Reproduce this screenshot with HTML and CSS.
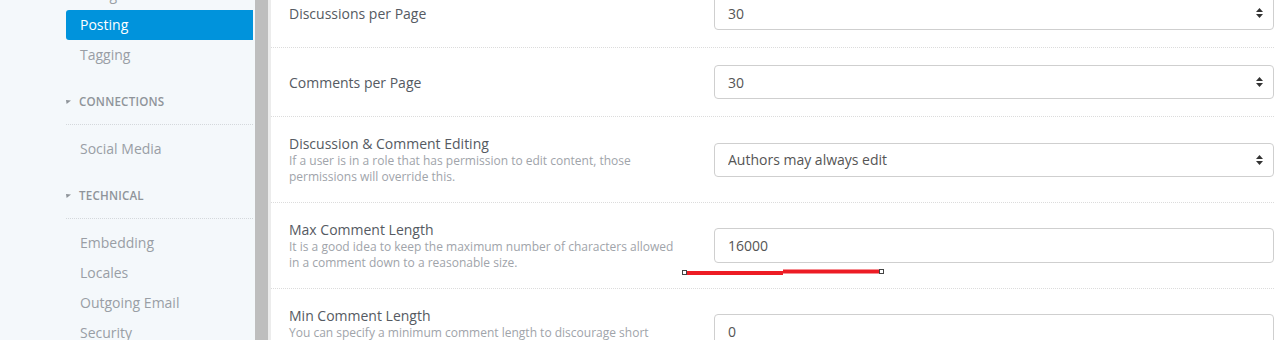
FILE: index.html
```html
<!DOCTYPE html>
<html lang="en">
<head>
  <meta charset="UTF-8">
  <meta name="viewport" content="width=device-width, initial-scale=1.0">
  <title>Dashboard - Posting</title>

  <link rel="stylesheet" href="styles.css">
</head>
<body>
  <div class="layout">
    <aside class="sidebar">
      <ul class="nav first">
        <li class="nav-item">Categories</li>
        <li class="nav-item active">Posting</li>
        <li class="nav-item">Tagging</li>
      </ul>

      <div class="nav-heading">
        <svg class="caret" width="5" height="4" viewBox="0 0 5 4"><polygon points="0,0 5,0.6 0.6,4" fill="#8f949a"/></svg>
        Connections
      </div>
      <ul class="nav">
        <li class="nav-item">Social Media</li>
      </ul>

      <div class="nav-heading">
        <svg class="caret" width="5" height="4" viewBox="0 0 5 4"><polygon points="0,0 5,0.6 0.6,4" fill="#8f949a"/></svg>
        Technical
      </div>
      <ul class="nav">
        <li class="nav-item">Embedding</li>
        <li class="nav-item">Locales</li>
        <li class="nav-item">Outgoing Email</li>
        <li class="nav-item">Security</li>
      </ul>
    </aside>

    <div class="scrollbar"></div>

    <main class="content">
      <ul class="form-list">
        <li class="form-row">
          <div class="label-wrap">
            <div class="label">Discussions per Page</div>
          </div>
          <div class="input-wrap select-wrap">
            <select class="form-control"><option>30</option></select>
            <svg class="select-arrow" width="7" height="10" viewBox="0 0 7 10"><polygon points="3.5,0 7,4 0,4" fill="#333"/><polygon points="0,6 7,6 3.5,10" fill="#333"/></svg>
          </div>
        </li>

        <li class="form-row">
          <div class="label-wrap">
            <div class="label">Comments per Page</div>
          </div>
          <div class="input-wrap select-wrap">
            <select class="form-control"><option>30</option></select>
            <svg class="select-arrow" width="7" height="10" viewBox="0 0 7 10"><polygon points="3.5,0 7,4 0,4" fill="#333"/><polygon points="0,6 7,6 3.5,10" fill="#333"/></svg>
          </div>
        </li>

        <li class="form-row">
          <div class="label-wrap">
            <div class="label">Discussion &amp; Comment Editing</div>
            <div class="info">If a user is in a role that has permission to edit content, those permissions will override this.</div>
          </div>
          <div class="input-wrap select-wrap">
            <select class="form-control"><option>Authors may always edit</option></select>
            <svg class="select-arrow" width="7" height="10" viewBox="0 0 7 10"><polygon points="3.5,0 7,4 0,4" fill="#333"/><polygon points="0,6 7,6 3.5,10" fill="#333"/></svg>
          </div>
        </li>

        <li class="form-row">
          <div class="label-wrap">
            <div class="label">Max Comment Length</div>
            <div class="info">It is a good idea to keep the maximum number of characters allowed in a comment down to a reasonable size.</div>
          </div>
          <div class="input-wrap">
            <input class="form-control" type="text" value="16000">
          </div>
        </li>

        <li class="form-row">
          <div class="label-wrap">
            <div class="label">Min Comment Length</div>
            <div class="info">You can specify a minimum comment length to discourage short comments.</div>
          </div>
          <div class="input-wrap">
            <input class="form-control" type="text" value="0">
          </div>
        </li>
      </ul>
    </main>
  </div>

  <!-- red markup line drawn over the screenshot -->
  <svg class="markup" width="203" height="9" viewBox="0 0 203 9">
    <rect x="5" y="3" width="96" height="4" fill="#ed1c24"/>
    <rect x="101" y="1.5" width="96" height="4" fill="#ed1c24"/>
    <rect x="0.5" y="2.5" width="4" height="4" fill="#fff" stroke="#444"/>
    <rect x="197.5" y="1.5" width="4" height="4" fill="#fff" stroke="#444"/>
  </svg>
</body>
</html>
```

FILE: styles.css
```css
* {
  box-sizing: border-box;
}

html, body {
  height: 100%;
}

body {
  margin: 0;
  font-family: 'Open Sans', 'Liberation Sans', sans-serif;
  font-size: 14px;
  color: #555a62;
  background: #fff;
  overflow: hidden;
}

.layout {
  display: flex;
  height: 100%;
}

/* sidebar */

.sidebar {
  flex: 0 0 255px;
  background-color: #f4f8fb;
  padding-left: 66px;
  padding-right: 2px;
}

.nav {
  list-style: none;
  margin: 9px 0 0;
  padding: 0;
}

.nav.first {
  margin-top: -20px;
}

.nav-item {
  height: 30px;
  line-height: 30px;
  padding-left: 14px;
  color: #999ea5;
  font-size: 14px;
}

.nav-item.active {
  background-color: #0093dc;
  color: #fff;
  border-radius: 3px 0 0 3px;
}

.nav-heading {
  display: flex;
  align-items: center;
  gap: 8px;
  padding: 24px 0 14px;
  line-height: 16px;
  font-size: 11.6px;
  font-weight: 600;
  text-transform: uppercase;
  letter-spacing: 0.2px;
  color: #8f949a;
  border-bottom: 1px dotted #d4d8dc;
}

.caret {
  display: block;
  flex: none;
}

/* fake scrollbar track */

.scrollbar {
  flex: 0 0 16px;
  background-color: #ececec;
  border-left: 13px solid #bebebe;
}

/* main form */

.content {
  flex: 1;
  min-width: 0;
}

.form-list {
  list-style: none;
  margin: -21px 0 0;
  padding: 0;
}

.form-row {
  display: flex;
  align-items: center;
  padding: 17px 0 17px 18px;
  border-bottom: 1px dotted #dcdcdc;
}

.label-wrap {
  flex: 0 0 395px;
  margin-right: 30px;
}

.label {
  font-size: 14px;
  line-height: 19px;
  color: #555a62;
}

.info {
  max-width: 396px;
  font-size: 12px;
  line-height: 16px;
  color: #a0a4aa;
}

.input-wrap {
  flex: 1;
  position: relative;
}

.form-control {
  display: block;
  width: 100%;
  height: 35px;
  padding: 0 13px;
  border: 1px solid #cfcfcf;
  border-radius: 4px;
  background: #fff;
  font-family: inherit;
  font-size: 14px;
  color: #555;
  appearance: none;
  -webkit-appearance: none;
  outline: none;
}

.select-wrap .form-control {
  height: 34px;
}

.select-arrow {
  position: absolute;
  right: 11px;
  top: 12px;
  pointer-events: none;
}

.markup {
  position: absolute;
  left: 682px;
  top: 268px;
}
```
